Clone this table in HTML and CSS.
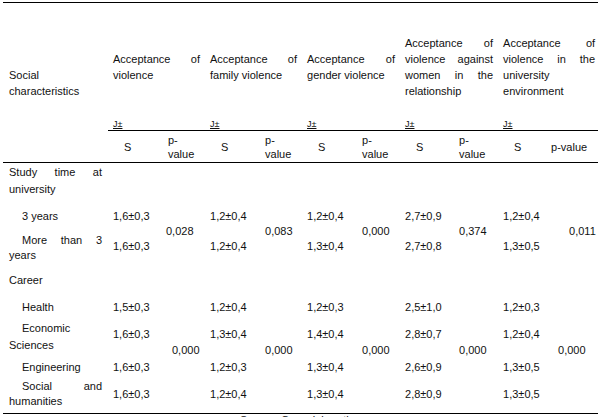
FILE: index.html
```html
<!DOCTYPE html>
<html lang="en">
<head>
<meta charset="utf-8">
<title>Social characteristics table</title>
<link rel="stylesheet" href="styles.css">
</head>
<body>
<div class="page">
<table class="stats">
<colgroup>
<col class="c-label">
<col class="c-s1"><col class="c-p1">
<col class="c-s2"><col class="c-p2">
<col class="c-s3"><col class="c-p3">
<col class="c-s4"><col class="c-p4">
<col class="c-s5"><col class="c-p5">
</colgroup>
<thead>
<tr class="r-head">
<th rowspan="2" class="label-head">Social characteristics</th>
<th colspan="2" class="group"><div class="gh"><div class="title"><p>Acceptance of violence</p></div><div class="xs">J±</div></div></th>
<th colspan="2" class="group"><div class="gh"><div class="title"><p>Acceptance of family violence</p></div><div class="xs">J±</div></div></th>
<th colspan="2" class="group"><div class="gh"><div class="title"><p>Acceptance of gender violence</p></div><div class="xs">J±</div></div></th>
<th colspan="2" class="group"><div class="gh"><div class="title"><p>Acceptance of violence against women in the relationship</p></div><div class="xs">J±</div></div></th>
<th colspan="2" class="group last"><div class="gh"><div class="title"><p>Acceptance of violence in the university environment</p></div><div class="xs">J±</div></div></th>
</tr>
<tr class="r-sub">
<th class="sh">S</th><th class="ph ph1">p-value</th>
<th class="sh">S</th><th class="ph">p-value</th>
<th class="sh">S</th><th class="ph">p-value</th>
<th class="sh">S</th><th class="ph">p-value</th>
<th class="sh">S</th><th class="ph ph5">p-value</th>
</tr>
</thead>
<tbody>
<tr class="r-study">
<td class="label lh17">Study time at university</td>
<td colspan="10"></td>
</tr>
<tr class="r-3y">
<td class="label indent">3 years</td>
<td>1,6±0,3</td><td rowspan="2">0,028</td>
<td>1,2±0,4</td><td rowspan="2">0,083</td>
<td>1,2±0,4</td><td rowspan="2">0,000</td>
<td>2,7±0,9</td><td rowspan="2">0,374</td>
<td>1,2±0,4</td><td rowspan="2" class="p5a">0,011</td>
</tr>
<tr class="r-more">
<td class="label indent lh15">More than 3 years</td>
<td class="up4">1,6±0,3</td>
<td class="up4">1,2±0,4</td>
<td class="up4">1,3±0,4</td>
<td class="up4">2,7±0,8</td>
<td class="up4">1,3±0,5</td>
</tr>
<tr class="r-career">
<td class="label">Career</td>
<td colspan="10"></td>
</tr>
<tr class="r-health">
<td class="label indent">Health</td>
<td>1,5±0,3</td><td rowspan="4" class="pc p1b">0,000</td>
<td>1,2±0,4</td><td rowspan="4" class="pc">0,000</td>
<td>1,2±0,3</td><td rowspan="4" class="pc">0,000</td>
<td>2,5±1,0</td><td rowspan="4" class="pc">0,000</td>
<td>1,2±0,3</td><td rowspan="4" class="pc p5b">0,000</td>
</tr>
<tr class="r-econ">
<td class="label indent lh17">Economic Sciences</td>
<td class="up7">1,6±0,3</td>
<td class="up7">1,3±0,4</td>
<td class="up7">1,4±0,4</td>
<td class="up7">2,8±0,7</td>
<td class="up7">1,2±0,4</td>
</tr>
<tr class="r-eng">
<td class="label indent">Engineering</td>
<td>1,6±0,3</td>
<td>1,2±0,3</td>
<td>1,3±0,4</td>
<td>2,6±0,9</td>
<td>1,3±0,5</td>
</tr>
<tr class="r-soc">
<td class="label indent lh15">Social and humanities</td>
<td>1,6±0,3</td>
<td>1,2±0,4</td>
<td>1,3±0,4</td>
<td>2,8±0,9</td>
<td>1,3±0,5</td>
</tr>
</tbody>
</table>
<p class="source">Source: Own elaboration</p>
</div>
</body>
</html>
```
FILE: styles.css
```css
* { box-sizing: border-box; }

body {
  margin: 0;
  background: #fff;
  font-family: "Liberation Sans", Arial, sans-serif;
  font-size: 11px;
  color: #111;
}

.page {
  padding: 2px 5px 0 3px;
}

.stats {
  border-collapse: collapse;
  table-layout: fixed;
  width: 595px;
  border-top: 1px solid #000;
  border-bottom: 1px solid #000;
}

.c-label { width: 105px; }
.c-s1 { width: 53px; }
.c-p1 { width: 44px; }
.c-s2 { width: 55px; }
.c-p2 { width: 42px; }
.c-s3 { width: 55px; }
.c-p3 { width: 43px; }
.c-s4 { width: 54px; }
.c-p4 { width: 44px; }
.c-s5 { width: 48px; }
.c-p5 { width: 52px; }

th, td {
  padding: 0 0 0 5px;
  text-align: left;
  font-weight: normal;
  vertical-align: middle;
  line-height: 16px;
}

.label-head {
  padding: 0 6px;
  text-align: justify;
  border-bottom: 1px solid #000;
}

.group {
  padding: 0 5px;
  vertical-align: top;
  border-bottom: 1px solid #000;
}
.group.last { padding-right: 3px; }

.gh {
  height: 127px;
  display: flex;
  flex-direction: column;
}

.title {
  flex: 1;
  display: flex;
  align-items: center;
  padding-top: 12px;
}

.title p {
  margin: 0;
  width: 100%;
  text-align: justify;
  line-height: 16px;
}

.xs {
  height: 12px;
  font-size: 9px;
  line-height: 12px;
  text-decoration: underline;
}

.r-sub th {
  height: 32px;
  border-bottom: 1px solid #000;
}

.sh { padding-left: 16px; }
.ph {
  line-height: 14px;
  padding-right: 8px;
}
.ph1 { padding-left: 7px; }
.ph5 { padding-right: 3px; }

.label {
  padding: 0 6px;
  text-align: justify;
}
.indent { text-indent: 13px; }
.lh15 { line-height: 15px; }
.lh17 { line-height: 17px; }

.r-study td { height: 36px; }
.r-3y td { height: 34px; }
.r-more td { height: 28px; }
.r-career td { height: 34px; }
.r-health td { height: 20px; }
.r-econ td { height: 41px; }
.r-eng td { height: 18px; }
.r-soc td { height: 38px; }

.up4 { padding-bottom: 4px; }
.up7 { padding-bottom: 7px; }
.pc { padding-bottom: 9px; }
.p1b { padding-left: 11px; }
.p5a { padding-left: 23px; }
.p5b { padding-left: 12px; }

.source {
  margin: 0;
  width: 595px;
  text-align: center;
  line-height: 13px;
}
```
